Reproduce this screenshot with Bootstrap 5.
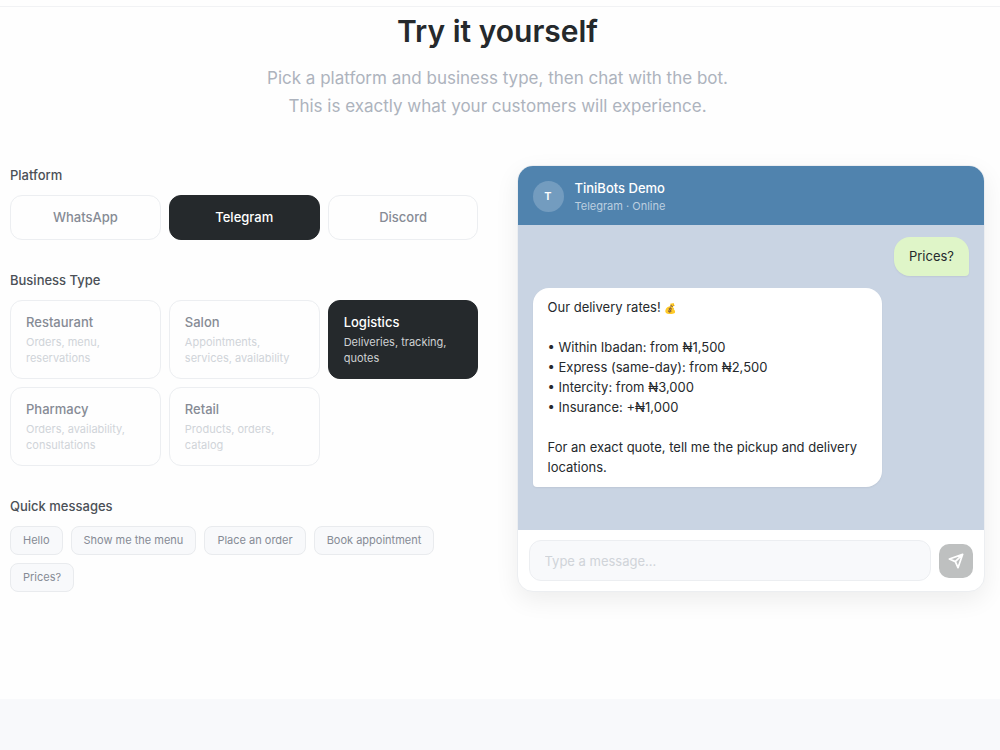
<!DOCTYPE html>
<html lang="en">
<head>
<meta charset="utf-8">
<meta name="viewport" content="width=device-width, initial-scale=1">
<title>TiniBots – Try it yourself</title>
<link href="https://cdn.jsdelivr.net/npm/bootstrap@5.3.0/dist/css/bootstrap.min.css" rel="stylesheet">
<style>
  :root { --ink: #25292c; --line: #eceef1; --soft: #f8f9fb; }
  body { font-family: Inter, "Liberation Sans", sans-serif; color: var(--ink); background: var(--soft); font-size: 13px; line-height: 20px; }
  .demo-section { background: #fefefe; padding: 1px 15px 107px 10px; }
  .top-rule { height: 7px; background: #fefefe; border-bottom: 1px solid #f1f2f4; }
  .demo-title { font-size: 30px; line-height: 46px; font-weight: 600; margin-bottom: 10px; }
  .demo-lead { font-size: 17px; line-height: 28px; color: #adb3bd; margin-bottom: 45px; }
  .demo-grid { display: grid; grid-template-columns: 1fr 1fr; gap: 38px; align-items: start; }
  .group { margin-bottom: 30px; }
  .group-label { font-size: 13px; line-height: 20px; font-weight: 500; color: #4b5057; margin-bottom: 10px; }
  .option-grid { display: grid; grid-template-columns: repeat(3, 1fr); gap: 8px; }
  .option { --bs-btn-color: #868b95; --bs-btn-bg: #fefefe; --bs-btn-border-color: var(--line); --bs-btn-border-radius: 12px;
    --bs-btn-font-size: 13px; --bs-btn-line-height: 19px; --bs-btn-font-weight: 500;
    --bs-btn-active-bg: var(--ink); --bs-btn-active-border-color: var(--ink); --bs-btn-active-color: #fff;
    --bs-btn-padding-y: 12px; --bs-btn-padding-x: 15px; }
  .option-desc { font-size: 11px; line-height: 16px; font-weight: 400; color: #d0d4d9; margin-top: 2px; }
  .active .option-desc { color: #cfd1d3; }
  .chip { --bs-btn-color: #868b95; --bs-btn-bg: var(--soft); --bs-btn-border-color: #e9ebee; --bs-btn-border-radius: 8px;
    --bs-btn-font-size: 11px; --bs-btn-line-height: 17px; --bs-btn-padding-y: 5px; --bs-btn-padding-x: 12px; }
  .chat { border-radius: 16px; background: #fff; border: 1px solid var(--line); box-shadow: 0 8px 24px rgba(0, 0, 0, .07); }
  .chat-head { background: #5083ae; padding: 12px 15px 11px; gap: 11px; }
  .avatar { width: 31px; height: 31px; background: #739cbf; font-size: 11px; font-weight: 600; }
  .chat-name { font-weight: 500; line-height: 20px; }
  .chat-status { font-size: 11px; line-height: 16px; color: #bccfe0; }
  .chat-body { background: #c9d4e3; min-height: 305px; padding: 12px 15px; gap: 12px; }
  .bubble { padding: 9px 15px 10px; border-radius: 16px; max-width: 80%; box-shadow: 0 1px 2px rgba(0, 0, 0, .06); }
  .bubble-user { background: #dff5c8; border-bottom-right-radius: 4px; }
  .bubble-bot { background: #fff; border-bottom-left-radius: 4px; white-space: pre-line; }
  .emoji { font-size: 10px; line-height: 1; }
  .composer { padding: 10px 11px; }
  .chat-input { background: var(--soft); border-color: var(--line); border-radius: 12px; font-size: 13px; line-height: 20px; padding: 9px 15px; height: 41px; }
  .chat-input::placeholder { color: #d0d4d9; }
  .send { width: 34px; height: 34px; border-radius: 10px; background: #bec0c0; color: #fff; }
</style>
</head>
<body>
<div class="top-rule"></div>
<main class="demo-section">
  <header class="text-center">
    <h2 class="demo-title">Try it yourself</h2>
    <p class="demo-lead">Pick a platform and business type, then chat with the bot.<br>This is exactly what your customers will experience.</p>
  </header>

  <div class="demo-grid">
    <div>
      <section class="group">
        <h3 class="group-label">Platform</h3>
        <div class="option-grid">
          <button type="button" class="btn option">WhatsApp</button>
          <button type="button" class="btn option active" aria-pressed="true">Telegram</button>
          <button type="button" class="btn option">Discord</button>
        </div>
      </section>
      <section class="group">
        <h3 class="group-label">Business Type</h3>
        <div class="option-grid">
          <button type="button" class="btn option text-start">Restaurant<span class="option-desc d-block">Orders, menu, reservations</span></button>
          <button type="button" class="btn option text-start">Salon<span class="option-desc d-block">Appointments, services, availability</span></button>
          <button type="button" class="btn option text-start active" aria-pressed="true">Logistics<span class="option-desc d-block">Deliveries, tracking, quotes</span></button>
          <button type="button" class="btn option text-start">Pharmacy<span class="option-desc d-block">Orders, availability, consultations</span></button>
          <button type="button" class="btn option text-start">Retail<span class="option-desc d-block">Products, orders, catalog</span></button>
        </div>
      </section>
      <section>
        <h3 class="group-label">Quick messages</h3>
        <div class="d-flex flex-wrap gap-2">
          <button type="button" class="btn chip">Hello</button>
          <button type="button" class="btn chip">Show me the menu</button>
          <button type="button" class="btn chip">Place an order</button>
          <button type="button" class="btn chip">Book appointment</button>
          <button type="button" class="btn chip">Prices?</button>
        </div>
      </section>
    </div>

    <section class="chat overflow-hidden" aria-label="Chat">
      <div class="chat-head d-flex align-items-center text-white">
        <div class="avatar rounded-circle d-flex align-items-center justify-content-center">T</div>
        <div>
          <div class="chat-name">TiniBots Demo</div>
          <div class="chat-status">Telegram · Online</div>
        </div>
      </div>
      <div class="chat-body d-flex flex-column">
        <div class="bubble bubble-user align-self-end">Prices?</div>
        <div class="bubble bubble-bot align-self-start">Our delivery rates! <span class="emoji">💰</span>

• Within Ibadan: from ₦1,500
• Express (same-day): from ₦2,500
• Intercity: from ₦3,000
• Insurance: +₦1,000

For an exact quote, tell me the pickup and delivery locations.</div>
      </div>
      <form class="composer d-flex align-items-center gap-2">
        <input type="text" class="form-control chat-input" placeholder="Type a message..." aria-label="Message">
        <button type="button" class="btn send p-0 border-0 flex-shrink-0 d-flex align-items-center justify-content-center" aria-label="Send">
          <svg width="16" height="16" viewBox="0 0 24 24" fill="none" stroke="currentColor" stroke-width="2.6" stroke-linecap="round" stroke-linejoin="round"><path d="M22 2 2 9l9 4 4 9zM22 2 11 13"/></svg>
        </button>
      </form>
    </section>
  </div>
</main>
<script src="https://cdn.jsdelivr.net/npm/bootstrap@5.3.0/dist/js/bootstrap.bundle.min.js"></script>
</body>
</html>
